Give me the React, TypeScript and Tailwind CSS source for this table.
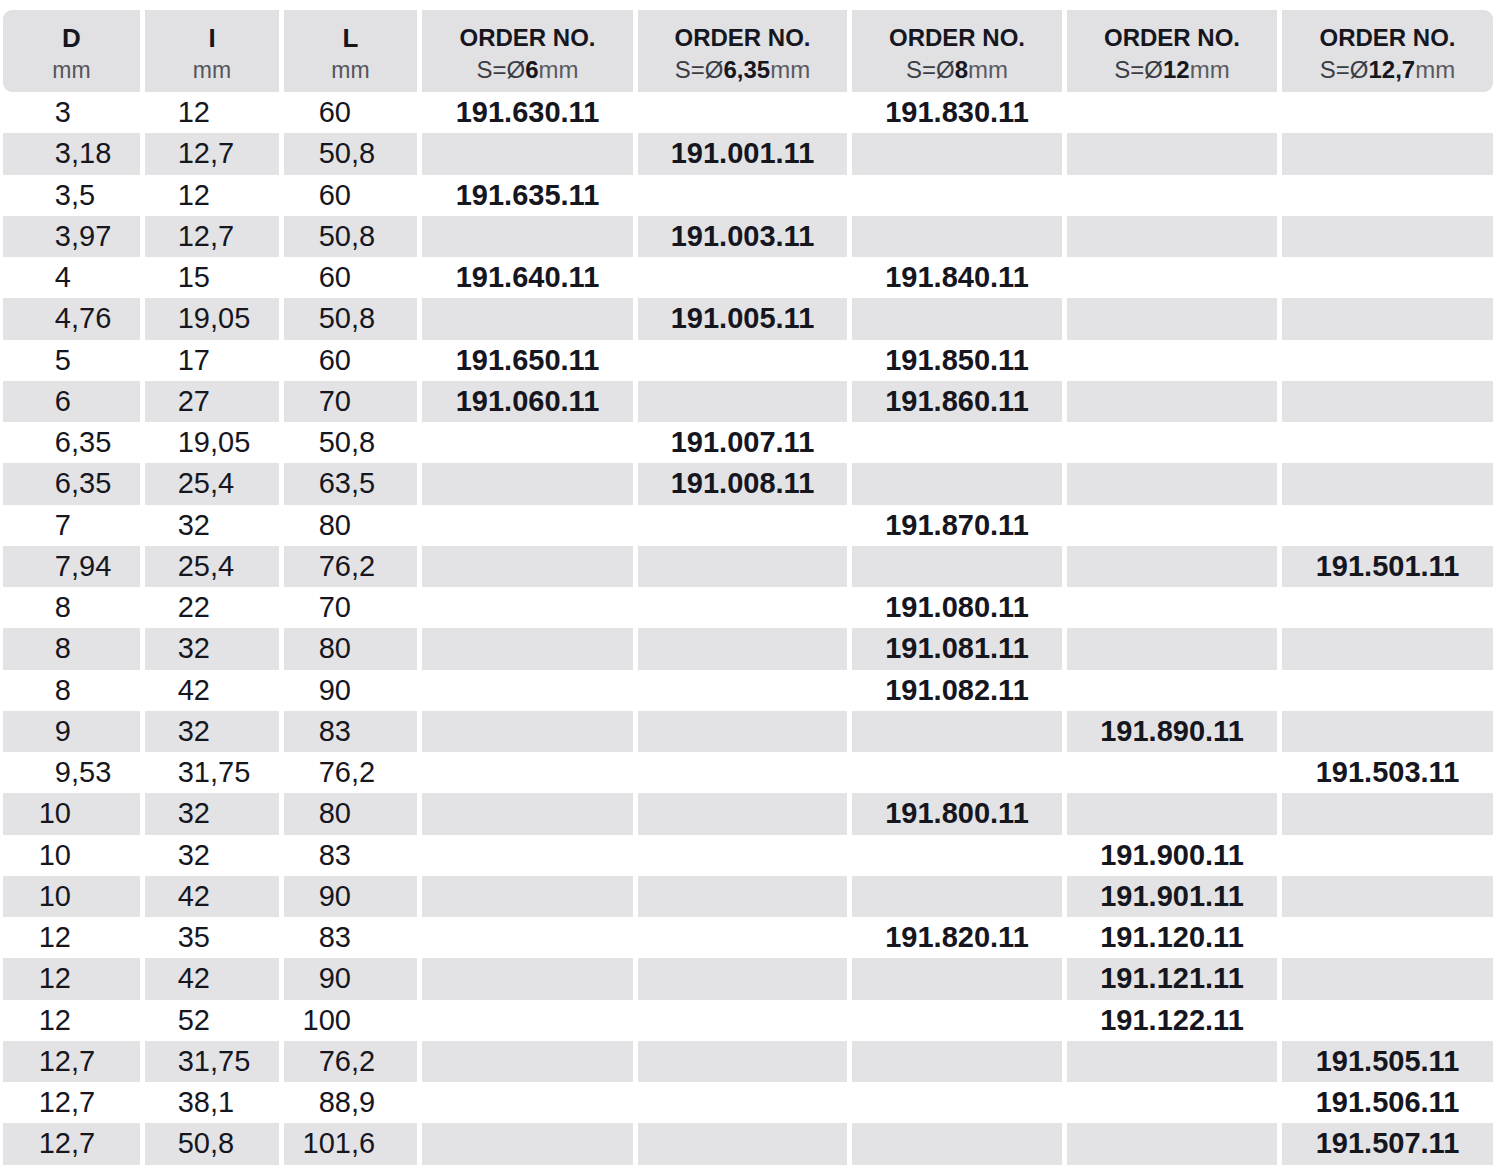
import React from "react";

type Row = { d: string; i: string; l: string; c: (string | null)[] };

const rows: Row[] = [
  { d: "3", i: "12", l: "60", c: ["191.630.11", null, "191.830.11", null, null] },
  { d: "3,18", i: "12,7", l: "50,8", c: [null, "191.001.11", null, null, null] },
  { d: "3,5", i: "12", l: "60", c: ["191.635.11", null, null, null, null] },
  { d: "3,97", i: "12,7", l: "50,8", c: [null, "191.003.11", null, null, null] },
  { d: "4", i: "15", l: "60", c: ["191.640.11", null, "191.840.11", null, null] },
  { d: "4,76", i: "19,05", l: "50,8", c: [null, "191.005.11", null, null, null] },
  { d: "5", i: "17", l: "60", c: ["191.650.11", null, "191.850.11", null, null] },
  { d: "6", i: "27", l: "70", c: ["191.060.11", null, "191.860.11", null, null] },
  { d: "6,35", i: "19,05", l: "50,8", c: [null, "191.007.11", null, null, null] },
  { d: "6,35", i: "25,4", l: "63,5", c: [null, "191.008.11", null, null, null] },
  { d: "7", i: "32", l: "80", c: [null, null, "191.870.11", null, null] },
  { d: "7,94", i: "25,4", l: "76,2", c: [null, null, null, null, "191.501.11"] },
  { d: "8", i: "22", l: "70", c: [null, null, "191.080.11", null, null] },
  { d: "8", i: "32", l: "80", c: [null, null, "191.081.11", null, null] },
  { d: "8", i: "42", l: "90", c: [null, null, "191.082.11", null, null] },
  { d: "9", i: "32", l: "83", c: [null, null, null, "191.890.11", null] },
  { d: "9,53", i: "31,75", l: "76,2", c: [null, null, null, null, "191.503.11"] },
  { d: "10", i: "32", l: "80", c: [null, null, "191.800.11", null, null] },
  { d: "10", i: "32", l: "83", c: [null, null, null, "191.900.11", null] },
  { d: "10", i: "42", l: "90", c: [null, null, null, "191.901.11", null] },
  { d: "12", i: "35", l: "83", c: [null, null, "191.820.11", "191.120.11", null] },
  { d: "12", i: "42", l: "90", c: [null, null, null, "191.121.11", null] },
  { d: "12", i: "52", l: "100", c: [null, null, null, "191.122.11", null] },
  { d: "12,7", i: "31,75", l: "76,2", c: [null, null, null, null, "191.505.11"] },
  { d: "12,7", i: "38,1", l: "88,9", c: [null, null, null, null, "191.506.11"] },
  { d: "12,7", i: "50,8", l: "101,6", c: [null, null, null, null, "191.507.11"] },
];

const shanks = ["6", "6,35", "8", "12", "12,7"];

const grid = "grid grid-cols-[137px_134px_133px_211px_209px_210px_210px_211px] gap-x-[5px]";

// integer part right-aligned in a fixed box so the commas line up
const Num = ({ v, w }: { v: string; w: string }) => {
  const [int, frac] = v.split(",");
  return (
    <div className="flex items-center h-full">
      <span className={`${w} text-right`}>{int}</span>
      {frac !== undefined && <span>,{frac}</span>}
    </div>
  );
};

export default function App() {
  return (
    <div
      className="w-[1500px] h-[1170px] bg-white pt-[10px] pl-[3px] text-[#16161f]"
      style={{ fontFamily: "'Liberation Sans', Arial, sans-serif" }}
    >
      {/* header */}
      <div className={`${grid} h-[82px]`}>
        {["D", "I", "L"].map((h, idx) => (
          <div
            key={h}
            className={`bg-[#e1e1e3] flex flex-col items-center pt-[12px] leading-[32px] ${idx === 0 ? "rounded-l-[9px]" : ""}`}
          >
            <span className="font-bold text-[26px]">{h}</span>
            <span className="text-[23px] text-[#55555c]">mm</span>
          </div>
        ))}
        {shanks.map((s, idx) => (
          <div
            key={s}
            className={`bg-[#e1e1e3] flex flex-col items-center pt-[12px] leading-[32px] ${idx === shanks.length - 1 ? "rounded-r-[9px]" : ""}`}
          >
            <span className="font-bold text-[24px]">ORDER NO.</span>
            <span className="text-[24px] text-[#3c3c44]">
              S=Ø<span className="font-bold text-[#16161f]">{s}</span>
              <span className="text-[#5a5a62]">mm</span>
            </span>
          </div>
        ))}
      </div>

      {/* body */}
      {rows.map((r, ri) => {
        const bg = ri % 2 === 1 ? "bg-[#e3e3e5]" : "";
        return (
          <div key={ri} className={`${grid} h-[41.25px] text-[29px] leading-none`}>
            <div className={bg}>
              <Num v={r.d} w="w-[68px]" />
            </div>
            <div className={bg}>
              <Num v={r.i} w="w-[65px]" />
            </div>
            <div className={bg}>
              <Num v={r.l} w="w-[67px]" />
            </div>
            {r.c.map((c, ci) => (
              <div key={ci} className={`${bg} flex items-center justify-center font-bold`}>
                {c}
              </div>
            ))}
          </div>
        );
      })}
    </div>
  );
}
